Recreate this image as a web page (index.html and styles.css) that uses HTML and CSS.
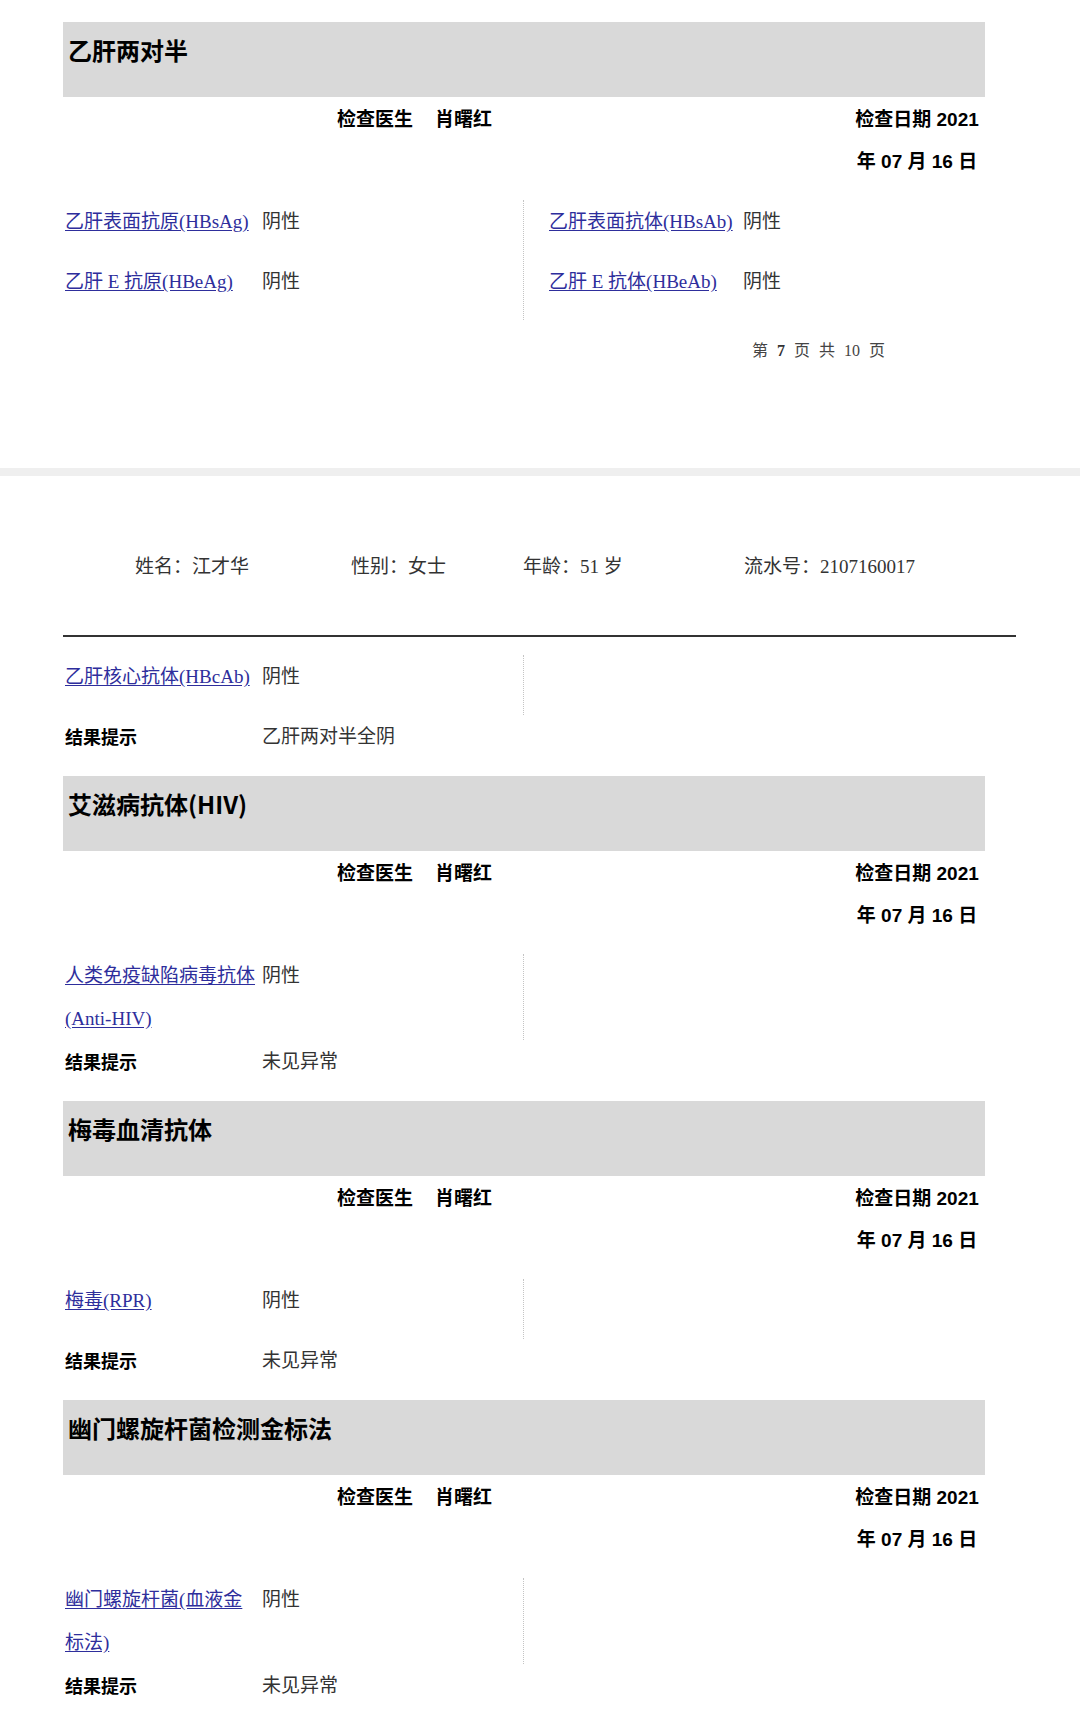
FILE: index.html
```html
<!DOCTYPE html>
<html lang="zh-CN">
<head>
<meta charset="utf-8">
<title>体检报告</title>
<link rel="stylesheet" href="styles.css">
</head>
<body>
<div class="page page-one">
  <section class="sec">
    <div class="sec-head"><h2>乙肝两对半</h2></div>
    <div class="sign">
      <div class="doctor"><span>检查医生</span><span class="doc-name">肖曙红</span></div>
      <div class="date"><span>检查日期 2021</span><span>年 07 月 16 日</span></div>
    </div>
    <div class="items">
      <div class="half">
        <div class="item"><a href="#">乙肝表面抗原(HBsAg)</a><span class="val">阴性</span></div>
        <div class="item"><a href="#">乙肝 E 抗原(HBeAg)</a><span class="val">阴性</span></div>
      </div>
      <div class="half right">
        <div class="item"><a href="#">乙肝表面抗体(HBsAb)</a><span class="val">阴性</span></div>
        <div class="item"><a href="#">乙肝 E 抗体(HBeAb)</a><span class="val">阴性</span></div>
      </div>
    </div>
  </section>
  <div class="pager"><span>第</span><b>7</b><span>页</span><span>共</span><span>10</span><span>页</span></div>
</div>
<div class="band"></div>
<div class="page page-two">
  <div class="info">
    <span>姓名：江才华</span>
    <span>性别：女士</span>
    <span>年龄：51 岁</span>
    <span>流水号：2107160017</span>
  </div>
  <div class="rule"></div>

  <section class="sec cont">
    <div class="items">
      <div class="half">
        <div class="item"><a href="#">乙肝核心抗体(HBcAb)</a><span class="val">阴性</span></div>
      </div>
      <div class="half right"></div>
    </div>
    <div class="result"><b>结果提示</b><span class="val">乙肝两对半全阴</span></div>
  </section>

  <section class="sec">
    <div class="sec-head"><h2>艾滋病抗体(HIV)</h2></div>
    <div class="sign">
      <div class="doctor"><span>检查医生</span><span class="doc-name">肖曙红</span></div>
      <div class="date"><span>检查日期 2021</span><span>年 07 月 16 日</span></div>
    </div>
    <div class="items">
      <div class="half">
        <div class="item"><a href="#">人类免疫缺陷病毒抗体(Anti-HIV)</a><span class="val">阴性</span></div>
      </div>
      <div class="half right"></div>
    </div>
    <div class="result"><b>结果提示</b><span class="val">未见异常</span></div>
  </section>

  <section class="sec">
    <div class="sec-head"><h2>梅毒血清抗体</h2></div>
    <div class="sign">
      <div class="doctor"><span>检查医生</span><span class="doc-name">肖曙红</span></div>
      <div class="date"><span>检查日期 2021</span><span>年 07 月 16 日</span></div>
    </div>
    <div class="items">
      <div class="half">
        <div class="item"><a href="#">梅毒(RPR)</a><span class="val">阴性</span></div>
      </div>
      <div class="half right"></div>
    </div>
    <div class="result"><b>结果提示</b><span class="val">未见异常</span></div>
  </section>

  <section class="sec">
    <div class="sec-head"><h2>幽门螺旋杆菌检测金标法</h2></div>
    <div class="sign">
      <div class="doctor"><span>检查医生</span><span class="doc-name">肖曙红</span></div>
      <div class="date"><span>检查日期 2021</span><span>年 07 月 16 日</span></div>
    </div>
    <div class="items">
      <div class="half">
        <div class="item"><a href="#">幽门螺旋杆菌(血液金标法)</a><span class="val">阴性</span></div>
      </div>
      <div class="half right"></div>
    </div>
    <div class="result"><b>结果提示</b><span class="val">未见异常</span></div>
  </section>
</div>
</body>
</html>
```

FILE: styles.css
```css
* { box-sizing: border-box; }

html, body {
  margin: 0;
  padding: 0;
  background: #ffffff;
}

body {
  width: 1080px;
  font-family: "Liberation Serif", "Noto Sans CJK SC", serif;
  font-size: 19px;
  color: #333333;
}

.page-one {
  height: 468px;
  padding-top: 22px;
}

.band {
  height: 8px;
  background: #efefef;
}

.sec {
  margin-left: 63px;
  width: 922px;
  margin-bottom: 18px;
}

.page-one .sec {
  margin-bottom: 0;
}

.sec-head {
  height: 75px;
  background: #d9d9d9;
  padding: 10px 0 0 5px;
}

.sec-head h2 {
  margin: 0;
  font-family: "Noto Sans CJK SC", sans-serif;
  font-weight: 700;
  font-size: 24px;
  line-height: 36px;
  color: #000000;
}

.sign {
  width: 934px;
  margin-top: 2px;
  display: flex;
  align-items: flex-start;
  font-family: "Liberation Sans", "Noto Sans CJK SC", sans-serif;
  font-weight: 700;
  font-size: 19px;
  line-height: 42px;
  color: #000000;
}

.doctor {
  margin-left: 274px;
  display: flex;
}

.doc-name {
  margin-left: 22px;
}

.date {
  margin-left: auto;
  width: 160px;
  display: flex;
  flex-direction: column;
  align-items: center;
}

.items {
  margin-top: 17px;
  display: grid;
  grid-template-columns: 460px 1fr;
}

.cont .items {
  margin-top: 18px;
}

.half {
  padding-left: 2px;
}

.half.right {
  border-left: 1px dotted #c4c4c4;
  padding-left: 25px;
}

.item {
  display: grid;
  grid-template-columns: 197px 1fr;
  min-height: 60px;
  padding-top: 1px;
  line-height: 42.5px;
  align-items: start;
}

.half.right .item {
  grid-template-columns: 194px 1fr;
}

.item a {
  margin-right: 3px;
  color: #2e2e9c;
  text-decoration: underline;
  text-underline-offset: 2px;
}

.val {
  color: #333333;
}

.result {
  display: grid;
  grid-template-columns: 197px 1fr;
  padding-left: 2px;
  line-height: 43px;
}

.result b {
  font-family: "Noto Sans CJK SC", sans-serif;
  font-weight: 700;
  font-size: 18px;
  color: #000000;
}

.pager {
  margin-top: 9px;
  margin-left: 752px;
  display: flex;
  gap: 9px;
  font-size: 16px;
  line-height: 43px;
  color: #444444;
}

.pager b {
  font-weight: 700;
  color: #333333;
}

.info {
  margin-top: 69px;
  padding-left: 135px;
  display: grid;
  grid-template-columns: 216px 172px 221px auto;
  line-height: 43px;
  color: #333333;
}

.rule {
  margin: 47px 0 0 63px;
  width: 953px;
  height: 2px;
  background: #333333;
}
```
